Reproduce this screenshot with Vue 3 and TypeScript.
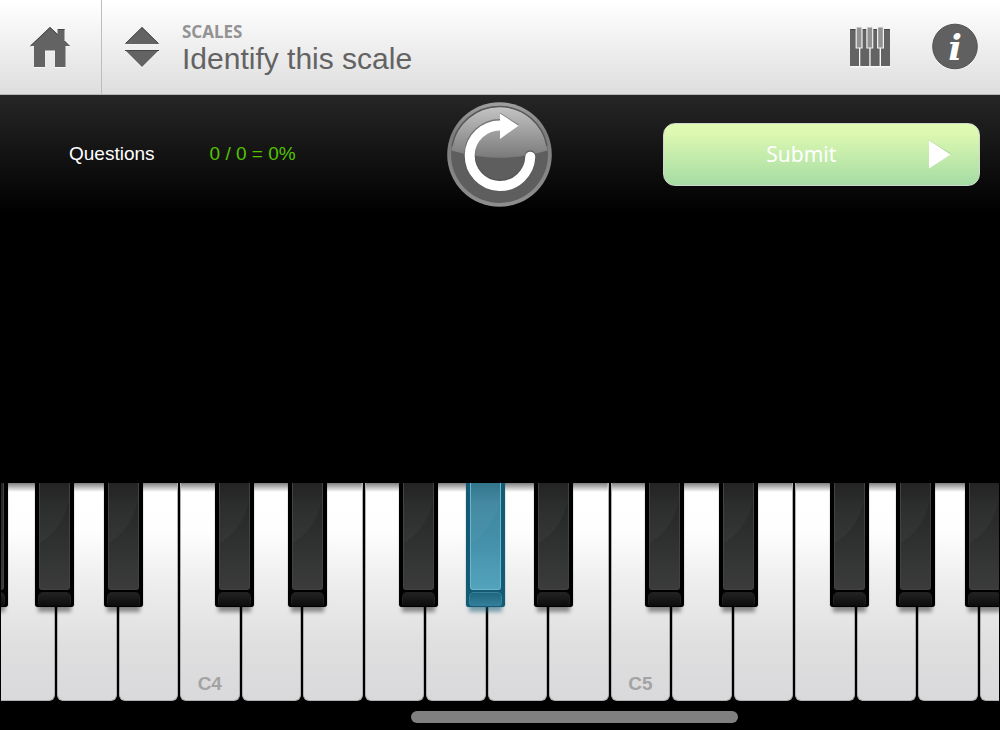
<script setup lang="ts">
import { ref } from 'vue'

interface BlackKey {
  note: string
  left: number
}

const octaves: number[] = [3, 4, 5]
const labelledOctaves: number[] = [4, 5]
const whiteNotes: string[] = ['C', 'D', 'E', 'F', 'G', 'A', 'B']

// Left edges, in percent of one octave's width
const blackKeys: BlackKey[] = [
  { note: 'C#', left: 8.3 },
  { note: 'D#', left: 25.3 },
  { note: 'F#', left: 51.1 },
  { note: 'G#', left: 66.6 },
  { note: 'A#', left: 82.5 },
]

const activeKey = ref<string>('G#4')
const scroll = ref<number>(61)
const correct = ref<number>(0)
const total = ref<number>(0)
</script>

<template>
  <div class="app">
    <header class="header">
      <button class="home" type="button" aria-label="Home">
        <svg width="40" height="42" viewBox="30 26 40 42">
          <path class="lowlight" d="M50 28 57.5 35V30H64.5V42L69.500 47H65.500V68H55V51.500H45V68H34V47H30Z" />
          <path class="glyph" d="M50 27 57.5 34V29H64.5V41L69.500 46H65.500V67H55V50.500H45V67H34V46H30Z" />
          <path class="edge" d="M30.500 46 50 27.500 57.500 34.500M58 29.500H64.500M64.500 41 69.500 46" />
        </svg>
      </button>
      <button class="sorter" type="button" aria-label="Change exercise">
        <svg width="34" height="42" viewBox="0 0 34 42">
          <path class="lowlight" d="M0 18.500H34L17 1.500ZM0 25H34L17 42Z" />
          <path class="glyph" d="M0 18H34L17 1ZM0 24H34L17 41Z" />
          <path class="edge" d="M.5 17.500 17 1.500 33.500 17.500M0 24.500H34" />
        </svg>
      </button>
      <div class="titles">
        <p class="category">SCALES</p>
        <h1 class="title">Identify this scale</h1>
      </div>
      <button class="tool" type="button" aria-label="Keyboard">
        <svg width="42" height="42" viewBox="0 0 42 42">
          <path class="lowlight" d="M1 4H41V41.500H1Z" />
          <path class="glyph" d="M1 3H10V40H1ZM11.300 3H20.300V40H11.300ZM21.600 3H30.600V40H21.600ZM32 3H41V40H32Z" />
          <path class="edge" d="M1 3.500H7M13 3.500H17M24 3.500H28M35 3.500H41" />
          <path class="sharps" d="M7.200 1H13V22H7.200ZM17.900 1H23.700V22H17.900ZM28.600 1H34.400V22H28.600Z" />
        </svg>
      </button>
      <button class="tool" type="button" aria-label="Information">
        <svg width="46" height="48" viewBox="0 0 46 48">
          <circle class="lowlight" cx="23" cy="24.500" r="22.500" />
          <circle class="info-disc" cx="23" cy="23.500" r="22.300" />
          <text class="info-i" x="23" y="37" text-anchor="middle">i</text>
        </svg>
      </button>
    </header>

    <section class="bar">
      <div class="score">
        <span class="score-label">Questions</span>
        <span class="score-value">{{ correct }} / {{ total }} = 0%</span>
      </div>
      <button class="replay" type="button" aria-label="Replay">
        <svg width="105" height="105" viewBox="0 0 105 105">
          <defs>
            <linearGradient id="ring" x1="0" y1="0" x2="0" y2="1">
              <stop offset="0" stop-color="#a0a0a0" />
              <stop offset="0.3" stop-color="#7c7c7c" />
              <stop offset="1" stop-color="#8e8e8e" />
            </linearGradient>
            <linearGradient id="gloss" x1="0" y1="0" x2="0" y2="1">
              <stop offset="0" stop-color="#c4c4c4" />
              <stop offset="1" stop-color="#7a7a7a" />
            </linearGradient>
          </defs>
          <circle cx="52.500" cy="52.500" r="52.300" fill="url(#ring)" />
          <circle cx="52.500" cy="52.500" r="48.500" fill="#5e5e5e" />
          <path d="M4.500 48.500A48.200 48.200 0 0 1 100.500 48.500Q52.500 63 4.500 48.500Z" fill="url(#gloss)" />
          <path d="M5 44A48.300 48.300 0 0 1 100 44" fill="none" stroke="#5a5a5a" stroke-width="1.500" />
          <g class="arrow-shade">
            <path class="arrow-arc" d="M54 22.400A30.300 30.300 0 1 0 83.300 53.700" />
            <path class="arrow-head" d="M53 10.500 72 22.700 53 36Z" />
          </g>
          <path class="arrow-arc" d="M54 23.400A30.300 30.300 0 1 0 83.300 54.700" />
          <path class="arrow-head" d="M53 11.500 71.500 23.700 53 37Z" />
        </svg>
      </button>
      <button class="submit" type="button">
        <span class="submit-label">Submit</span>
        <svg class="submit-icon" width="22" height="30" viewBox="0 0 22 30">
          <path d="M0 0 22 13.500 0 27.500Z" fill="#9fca8c" opacity="0.6" />
          <path d="M0 .5 21.500 14.500 0 28.500Z" fill="#fff" />
        </svg>
      </button>
    </section>

    <main class="stage"></main>

    <section class="keyboard" aria-label="Piano keyboard">
      <div class="strip">
        <div v-for="octave in octaves" :key="octave" class="octave">
          <button
            v-for="note in whiteNotes"
            :key="note"
            class="white"
            type="button"
            :aria-label="note + octave"
          >
            <span v-if="note === 'C' && labelledOctaves.includes(octave)">C{{ octave }}</span>
          </button>
          <button
            v-for="key in blackKeys"
            :key="key.note"
            class="black"
            :class="{ active: activeKey === key.note + octave }"
            :style="{ left: key.left + '%' }"
            type="button"
            :aria-label="key.note + octave"
          >
            <span class="top">
              <svg class="sheen" viewBox="0 0 32 110" preserveAspectRatio="none">
                <path d="M0 0H32V18Q24 49 0 62Z" />
              </svg>
            </span>
            <span class="lip"></span>
          </button>
        </div>
      </div>
    </section>

    <input v-model="scroll" class="scroller" type="range" min="0" max="100" aria-label="Keyboard position" />
  </div>
</template>

<style>
body {
  margin: 0;
  background: #000;
}
</style>

<style scoped>
* {
  box-sizing: border-box;
}

button {
  margin: 0;
  padding: 0;
  border: 0;
  background: none;
  cursor: pointer;
}

svg {
  display: block;
}

.app {
  display: flex;
  flex-direction: column;
  min-height: 100vh;
  overflow: hidden;
  background: #000;
  font-family: "Liberation Sans", Arial, Helvetica, sans-serif;
}

.header {
  display: flex;
  align-items: stretch;
  height: 95px;
  padding-right: 22px;
  background: linear-gradient(#fff 0%, #fcfcfc 10%, #dedede 100%);
  border-bottom: 1px solid #b4b8b6;
}

.home {
  display: flex;
  align-items: center;
  justify-content: center;
  width: 102px;
  padding-right: 2px;
  border-right: 1px solid #bdbdbd;
}

.sorter {
  display: flex;
  align-items: center;
  padding: 0 23px;
}

.glyph {
  fill: #636363;
}

.edge {
  fill: none;
  stroke: #454545;
  stroke-width: 1;
}

.lowlight {
  fill: #f8f8f8;
}

.sharps {
  fill: #929292;
  stroke: #f0f0f0;
  stroke-width: 1.2;
}

.titles {
  flex: 1;
  padding-top: 21px;
}

.category {
  margin: 0;
  color: #939393;
  font: bold 17px/22px "Noto Sans", sans-serif;
}

.title {
  margin: 0;
  color: #636363;
  font-size: 30px;
  font-weight: normal;
  line-height: 32px;
  white-space: nowrap;
}

.tool {
  display: flex;
  align-items: center;
}

.tool + .tool {
  margin-left: 41px;
}

.info-disc {
  fill: #606060;
  stroke: #505050;
  stroke-width: 1;
}

.info-i {
  fill: #fff;
  font: italic bold 36px "DejaVu Serif", "Liberation Serif", serif;
}

.bar {
  display: grid;
  grid-template-columns: 1fr 105px 1fr;
  align-items: center;
  height: 119px;
  padding-right: 1px;
  background: linear-gradient(#262626, #000);
}

.score {
  display: flex;
  gap: 55px;
  padding: 0 0 2px 69px;
  font-size: 19px;
  line-height: 24px;
  white-space: nowrap;
}

.score-label {
  color: #fff;
}

.score-value {
  color: #54c300;
}

.replay {
  border-radius: 50%;
}

.arrow-arc {
  fill: none;
  stroke: #fff;
  stroke-width: 10;
  stroke-linecap: round;
}

.arrow-head {
  fill: #fff;
}

.arrow-shade .arrow-arc {
  stroke: #505050;
  stroke-width: 11;
}

.arrow-shade .arrow-head {
  fill: #606060;
}

.arrow-shade {
  opacity: 0.6;
}

.submit {
  display: flex;
  align-items: center;
  justify-self: end;
  width: 71%;
  height: 63px;
  margin-right: 19px;
  padding: 0 28px 0 10px;
  border: 1px solid #cfd9cd;
  border-radius: 12px;
  background: linear-gradient(#e0fbb2 0%, #ddf8b1 15%, #a5dca4 100%);
}

.submit-label {
  flex: 1;
  padding-bottom: 1px;
  color: #fff;
  font: 21px/30px "Noto Sans", sans-serif;
}

.stage {
  flex: 1;
  min-height: 120px;
}

.keyboard {
  height: 218px;
  margin: 0 1px;
  overflow: hidden;
}

.strip {
  display: flex;
  height: 100%;
  margin-left: -25.3%;
}

.octave {
  position: relative;
  display: flex;
  flex: none;
  width: 34.43%;
}

.white {
  display: flex;
  flex: 1;
  align-items: flex-end;
  justify-content: center;
  margin: 0 1px;
  padding-bottom: 5px;
  border: 1px solid #b0b0b2;
  border-top: 0;
  border-radius: 0 0 6px 6px;
  background:
    linear-gradient(rgba(0, 0, 0, 0.5), rgba(0, 0, 0, 0)) top / 100% 9px no-repeat,
    linear-gradient(#fff 0%, #fefefe 22%, #eeeeef 45%, #dfdfe0 75%, #d9d9db 100%);
  color: #a3a3a3;
  font: bold 19px/22px "Liberation Sans", Arial, sans-serif;
}

.black {
  position: absolute;
  top: 0;
  display: flex;
  flex-direction: column;
  gap: 2px;
  width: 9.1%;
  height: 124px;
  padding: 0 3px 1px;
  border-radius: 0 0 3px 3px;
  background: #000;
  box-shadow: 0 8px 4px -3px rgba(0, 0, 0, 0.4), 0 0 1px rgba(0, 0, 0, 0.6);
}

.top {
  flex: 1;
  margin: 0 1px;
  overflow: hidden;
  border: 1px solid #424242;
  border-top: 0;
  border-radius: 0 0 3px 3px;
  background: linear-gradient(#1c1c1c, #262727 20%, #303232 60%, #3b3b3b);
}

.sheen {
  width: 100%;
  height: 100%;
  fill: rgba(255, 255, 255, 0.03);
}

.lip {
  height: 14px;
  border: 1px solid #202020;
  border-bottom: 0;
  border-radius: 5px 5px 3px 3px;
  background: linear-gradient(#222, #0c0c0c);
}

.black.active {
  background: #145a74;
  box-shadow: 0 8px 4px -3px rgba(20, 90, 116, 0.5), 0 0 1px #145a74;
}

.active .top {
  border-color: #6bb8ce;
  background: linear-gradient(#2c7089, #3f879f 20%, #438ea8 50%, #53a3bd);
}

.active .lip {
  border-color: #378199;
  background: linear-gradient(#1f6680, #34809a);
}

.scroller {
  appearance: none;
  width: 100%;
  height: 12px;
  margin: 10px 0 7px;
  background: transparent;
}

.scroller::-webkit-slider-thumb {
  appearance: none;
  width: 327px;
  height: 12px;
  border-radius: 6px;
  background: #808080;
}
</style>
